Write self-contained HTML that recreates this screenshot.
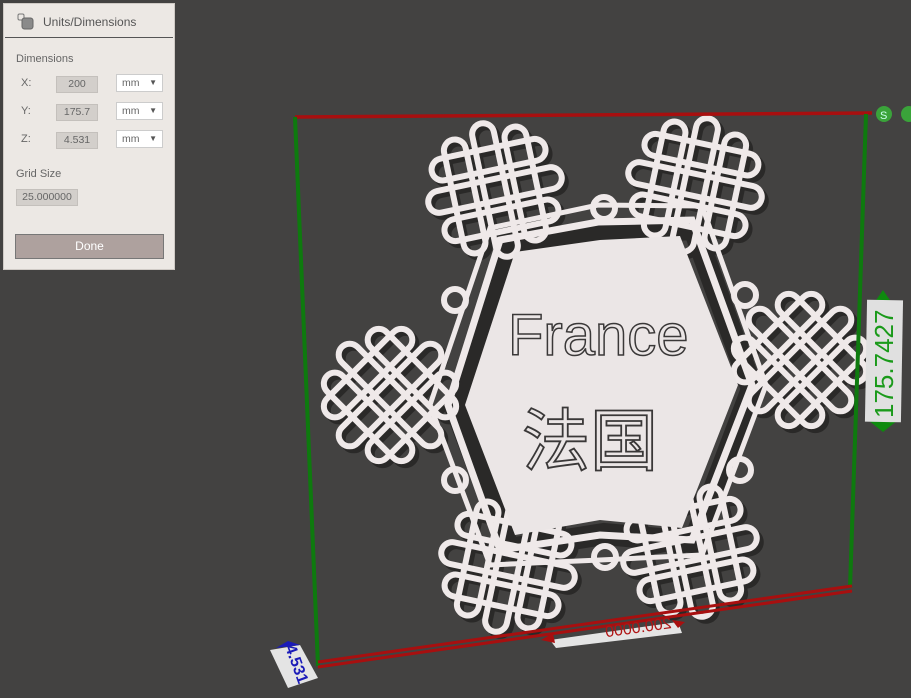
<!DOCTYPE html>
<html><head><meta charset="utf-8"><style>
body{margin:0;width:911px;height:698px;background:#434241;overflow:hidden;font-family:"Liberation Sans",sans-serif;position:relative}
.panel{position:absolute;left:3px;top:3px;width:170px;height:265px;background:#ece8e4;border:1px solid #cfcac5}
.hd{height:33px;border-bottom:1px solid #555;margin:0 1px;position:relative}
.hd span{position:absolute;left:38px;top:11px;font-size:12px;color:#555}
.lbl{position:absolute;font-size:11px;color:#666}
.val{position:absolute;left:52px;width:40px;height:15px;background:#d3cfcb;border:1px solid #c4c0bc;font-size:10.5px;color:#666;text-align:center;line-height:15px}
.sel{position:absolute;left:112px;width:45px;height:16px;background:#fff;border:1px solid #ccc;font-size:10.5px;color:#666;line-height:16px}
.sel span{position:absolute;left:5px}
.sel i{position:absolute;right:5px;top:0;font-style:normal;font-size:8px;color:#555}
.done{position:absolute;left:11px;top:230px;width:147px;height:23px;background:#aea19e;border:1px solid #777;color:#fff;font-size:12px;text-align:center;line-height:23px}
</style></head><body>
<svg width="911" height="698" style="position:absolute;left:0;top:0">
<defs>
<g id="k" fill="none">
<rect x="-58" y="-42" width="116" height="22" rx="11"/>
<rect x="-68" y="-11" width="136" height="22" rx="11"/>
<rect x="-58" y="20" width="116" height="22" rx="11"/>
<rect x="-42" y="-58" width="22" height="116" rx="11"/>
<rect x="-11" y="-68" width="22" height="136" rx="11"/>
<rect x="20" y="-58" width="22" height="116" rx="11"/>
</g>
</defs>
<g stroke="#2a2928" stroke-width="6" fill="none" transform="translate(4,4)">
<polygon points="505,245 598,230 690,225 748,385 690,538 600,530 505,545 452,405" stroke-width="22"/>
<use href="#k" transform="translate(495,190) rotate(-12)"/>
<use href="#k" transform="translate(695,185) rotate(12)"/>
<use href="#k" transform="translate(800,360) rotate(45)"/>
<use href="#k" transform="translate(690,550) rotate(-12)"/>
<use href="#k" transform="translate(508,565) rotate(12)"/>
<use href="#k" transform="translate(390,395) rotate(45)"/>
</g>
<g stroke="#efe9e9" stroke-width="6" fill="none">
<polygon points="500,240 598,222 692,220 752,385 692,540 600,535 500,550 448,405" stroke-width="7"/>
<polygon points="490,228 598,205 702,206 766,385 702,555 600,560 490,565 430,405" stroke-width="5"/>
<circle cx="604" cy="208" r="11"/><circle cx="605" cy="557" r="11"/>
<circle cx="455" cy="300" r="11"/><circle cx="455" cy="480" r="11"/>
<circle cx="745" cy="295" r="11"/><circle cx="740" cy="470" r="11"/>
<use href="#k" transform="translate(495,190) rotate(-12)"/>
<use href="#k" transform="translate(695,185) rotate(12)"/>
<use href="#k" transform="translate(800,360) rotate(45)"/>
<use href="#k" transform="translate(690,550) rotate(-12)"/>
<use href="#k" transform="translate(508,565) rotate(12)"/>
<use href="#k" transform="translate(390,395) rotate(45)"/>
</g>
<polygon points="515,252 600,240 680,236 738,385 682,528 600,520 515,535 465,405" fill="#ebe6e6"/>
<text x="508" y="355" font-size="58" fill="#ebe6e6" stroke="#3a3838" stroke-width="1.5" font-family="Liberation Sans, sans-serif">France</text>
<text x="522" y="465" font-size="68" fill="#ebe6e6" stroke="#3a3838" stroke-width="1.8" font-family="Liberation Sans, Noto Sans CJK SC, sans-serif">法国</text>
<line x1="295" y1="117" x2="872" y2="113" stroke="#a80f0f" stroke-width="3.5"/>
<line x1="295" y1="117" x2="318" y2="666" stroke="#0e7a0e" stroke-width="4"/>
<line x1="866" y1="114" x2="850" y2="588" stroke="#0e7a0e" stroke-width="4"/>
<line x1="318" y1="662" x2="852" y2="586" stroke="#a80f0f" stroke-width="3"/>
<line x1="318" y1="667" x2="852" y2="591" stroke="#a80f0f" stroke-width="3"/>
<circle cx="884" cy="114" r="8" fill="#3aa33a"/><text x="880" y="119" font-size="11" fill="#cfe" >S</text>
<circle cx="909" cy="114" r="8" fill="#3aa33a"/>
<polygon points="868,312 883,290 898,312" fill="#0e8a0e"/>
<polygon points="868,420 883,432 898,420" fill="#0e8a0e"/>
<rect x="866" y="300" width="36" height="122" fill="#e0e0e0" transform="rotate(1 884 360)"/>
<text transform="translate(893,418) rotate(-90)" font-size="26" fill="#1a9a1a" font-family="Liberation Sans, sans-serif">175.7427</text>
<polygon points="550,640 678,622 682,633 556,648" fill="#e4e4e4"/>
<polygon points="541,640 553,633 555,643" fill="#a80f0f"/>
<polygon points="672,620 685,622 678,628" fill="#a80f0f"/>
<text transform="translate(672,628) rotate(172) scale(1,-1)" font-size="16" fill="#b01515" font-family="Liberation Sans, sans-serif">200.0000</text>
<polygon points="270,650 300,645 318,678 288,688" fill="#e4e4e4"/>
<text transform="translate(285,647) rotate(70)" font-size="16" fill="#1a1ab8" font-weight="bold">4.531</text>
<polygon points="276,648 288,641 300,645" fill="#1a1ab8"/>
</svg>
<div class="panel">
<div class="hd">
<svg width="20" height="20" style="position:absolute;left:12px;top:9px"><rect x="1" y="1" width="6" height="6" rx="1.5" fill="none" stroke="#777"/><rect x="5" y="5" width="11" height="11" rx="2.5" fill="#8a8a8a" stroke="#666"/></svg>
<span>Units/Dimensions</span></div>
<div class="lbl" style="left:12px;top:49px">Dimensions</div>
<div class="lbl" style="left:17px;top:73px">X:</div><div class="val" style="top:72px">200</div><div class="sel" style="top:70px"><span>mm</span><i>▼</i></div>
<div class="lbl" style="left:17px;top:101px">Y:</div><div class="val" style="top:100px">175.7</div><div class="sel" style="top:98px"><span>mm</span><i>▼</i></div>
<div class="lbl" style="left:17px;top:129px">Z:</div><div class="val" style="top:128px">4.531</div><div class="sel" style="top:126px"><span>mm</span><i>▼</i></div>
<div class="lbl" style="left:12px;top:164px">Grid Size</div>
<div class="val" style="left:12px;top:185px;width:60px">25.000000</div>
<div class="done">Done</div>
</div>
</body></html>
